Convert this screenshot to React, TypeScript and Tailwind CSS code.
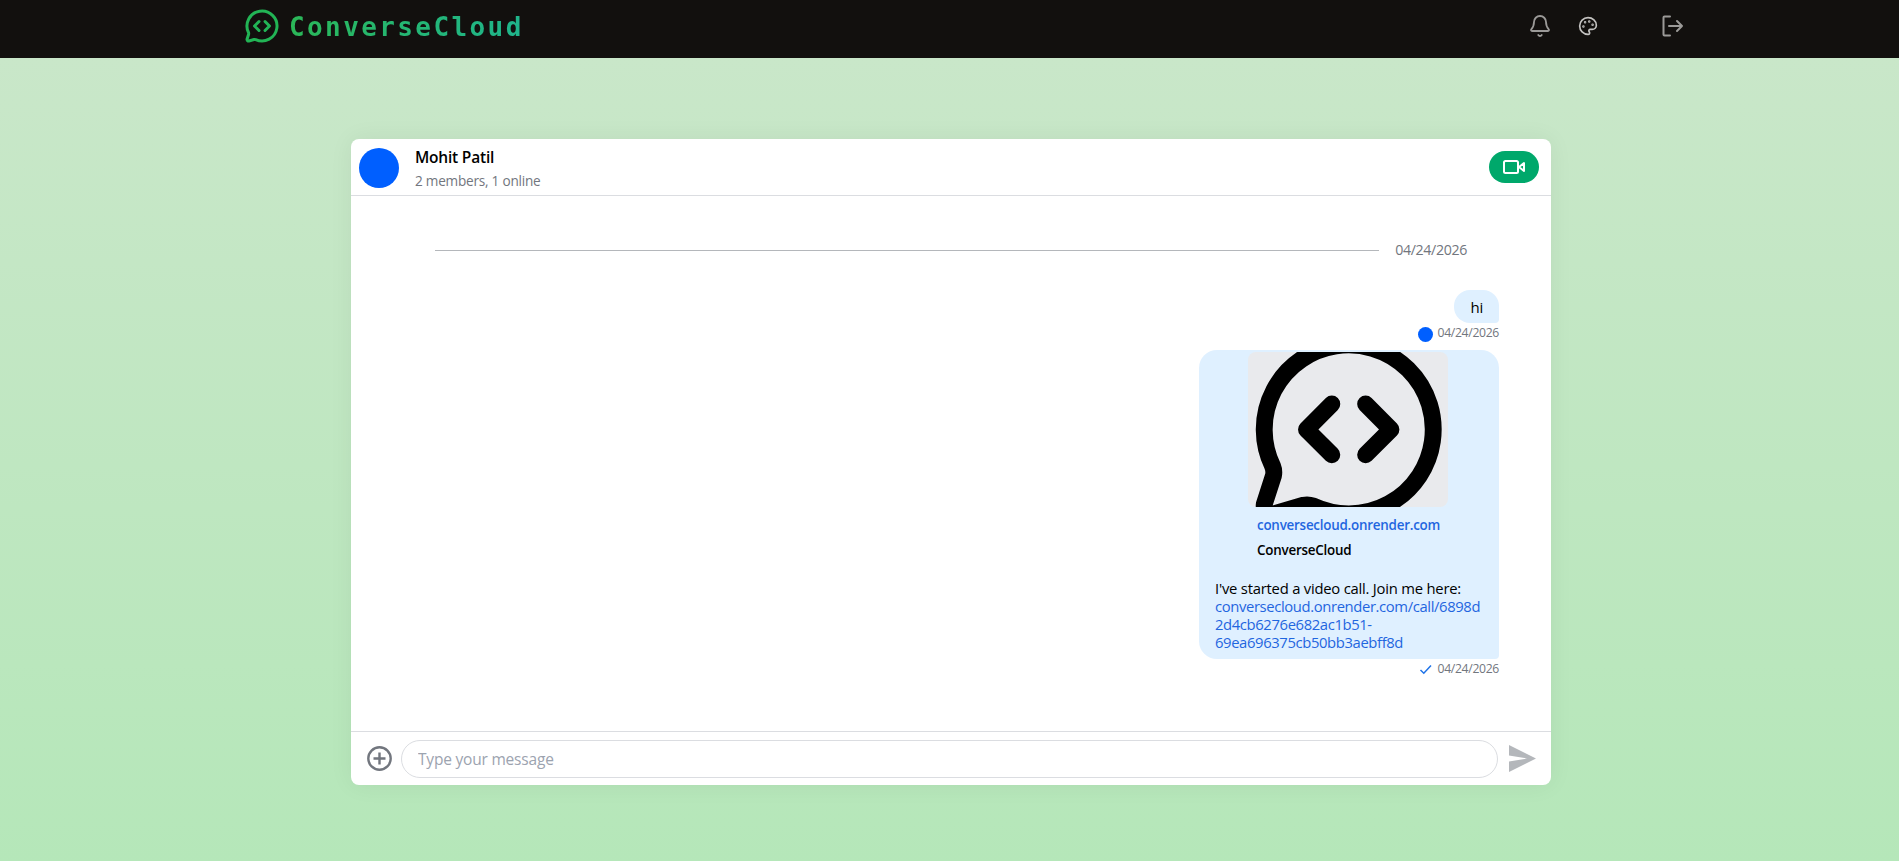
import React, { useState } from 'react';
import { Bell, Palette } from 'lucide-react';

const CALL_LINK = [
    'conversecloud.onrender.com/call/6898d',
    '2d4cb6276e682ac1b51-',
    '69ea696375cb50bb3aebff8d',
];

const BUBBLE_PATH =
    'M2.992 16.342a2 2 0 0 1 .094 1.167l-1.065 3.29a1 1 0 0 0 1.236 1.168l3.413-.998a2 2 0 0 1 1.099.092 10 10 0 1 0-4.777-4.719';

function LogoPaths() {
    return (
        <>
            <path d={BUBBLE_PATH} />
            <path d="m10 9-3 3 3 3" />
            <path d="m14 15 3-3-3-3" />
        </>
    );
}

function Navbar() {
    return (
        <header className="h-[58px] bg-[#12100e] pl-[244px] pr-[214px] flex items-center justify-between pb-[6px]">
            <div className="flex items-center gap-[9px]">
                <svg
                    viewBox="0 0 24 24"
                    className="w-[36px] h-[36px] text-[#22b455]"
                    fill="none"
                    stroke="currentColor"
                    strokeWidth="2"
                    strokeLinecap="round"
                    strokeLinejoin="round"
                >
                    <LogoPaths />
                </svg>
                <span className="bg-gradient-to-r from-[#2bb757] to-[#1fb58c] bg-clip-text text-transparent font-['DejaVu_Sans_Mono',monospace] font-bold text-[26px] leading-8 tracking-[2.4px] pt-[2px]">
                    ConverseCloud
                </span>
            </div>
            <div className="flex items-center text-[#9b9a98]">
                <button className="mr-[26px]">
                    <Bell size={24} strokeWidth={1.8} />
                </button>
                <button className="mr-[61px] text-[#c4c3c1]">
                    <Palette size={20} strokeWidth={2} />
                </button>
                <button>
                    <svg
                        width="26"
                        height="26"
                        viewBox="0 0 26 26"
                        fill="none"
                        stroke="currentColor"
                        strokeWidth="2"
                        strokeLinecap="round"
                        strokeLinejoin="round"
                    >
                        <path d="M11 3.500H5.500a1 1 0 0 0-1 1v17a1 1 0 0 0 1 1H11" />
                        <path d="M10 13h13M18 8l5 5-5 5" />
                    </svg>
                </button>
            </div>
        </header>
    );
}

function ChannelHeader() {
    return (
        <div className="h-[57px] shrink-0 border-b border-[#dbdde1] flex items-center pl-2 pr-3">
            <div className="w-10 h-10 rounded-full bg-[#005fff] mt-[2px]" />
            <div className="ml-4 flex-1 pt-[3px]">
                <div className="text-[15.5px] leading-6 font-semibold tracking-[-0.2px] text-black">Mohit Patil</div>
                <div className="text-[13.6px] leading-6 tracking-[-0.23px] text-[#72767e]">2 members, 1 online</div>
            </div>
            <button className="w-[50px] h-8 rounded-full bg-[#00a86b] flex items-center justify-center">
                <svg width="22" height="14" viewBox="0 0 22 14" fill="none" stroke="white" strokeWidth="2" strokeLinejoin="round">
                    <rect x="1" y="1" width="14" height="12" rx="1.500" />
                    <path d="m16 7 5-4v8z" />
                </svg>
            </button>
        </div>
    );
}

function DateSeparator() {
    return (
        <div className="flex items-center gap-4 pl-[84px] pr-[84px] pt-[44px]">
            <div className="flex-1 h-px bg-[#b4b7bb]" />
            <div className="text-[14.2px] leading-5 tracking-[-0.35px] text-[#72767e]">04/24/2026</div>
        </div>
    );
}

function MessageMeta({ children }: { children: React.ReactNode }) {
    return (
        <div className="flex items-center gap-[5px] h-5 pt-px text-[12.2px] tracking-[-0.32px] text-[#72767e]">
            {children}
            <span>04/24/2026</span>
        </div>
    );
}

function LinkCard() {
    return (
        <div className="w-[200px] ml-[49px]">
            <svg
                viewBox="0.08 2.84 23.67 18.34"
                className="block w-[200px] h-[155px] rounded-lg bg-[#e9eaed]"
                fill="none"
                stroke="black"
                strokeWidth="2"
                strokeLinecap="round"
                strokeLinejoin="round"
            >
                <LogoPaths />
            </svg>
            <div className="pl-[9px] pt-[6px] text-[13.4px] leading-[25px] font-semibold tracking-[-0.23px]">
                <div className="text-[#1f66e0]">conversecloud.onrender.com</div>
                <div className="text-black">ConverseCloud</div>
            </div>
        </div>
    );
}

function MessageList() {
    return (
        <div className="flex-1 min-h-0 flex flex-col">
            <DateSeparator />
            <div className="flex flex-col items-end pr-[52px] pt-[30px]">
                <div className="h-[33px] px-4 pt-[2px] rounded-2xl rounded-br-sm bg-[#dff0ff] flex items-center text-[15px] tracking-[-0.2px]">
                    hi
                </div>
                <MessageMeta>
                    <div className="w-[15px] h-[15px] mt-px rounded-full bg-[#005fff]" />
                </MessageMeta>
                <div className="mt-[7px] w-[300px] h-[309px] pt-[2px] rounded-[18px] rounded-br-sm bg-[#dff0ff]">
                    <LinkCard />
                    <div className="px-4 pt-[16px] text-[14.8px] leading-[18px] tracking-[-0.22px] whitespace-nowrap">
                        <div>I've started a video call. Join me here:</div>
                        <div className="text-[#1f66e0] tracking-[-0.37px]">
                            {CALL_LINK.map((line) => (
                                <div key={line}>{line}</div>
                            ))}
                        </div>
                    </div>
                </div>
                <MessageMeta>
                    <svg width="14" height="12" viewBox="0 0 14 12" fill="none" stroke="#1f73e8" strokeWidth="1.5">
                        <path d="M1.500 6 4.800 9.200 12 1.500" />
                    </svg>
                </MessageMeta>
            </div>
        </div>
    );
}

function MessageInput() {
    const [text, setText] = useState('');

    return (
        <div className="h-[54px] shrink-0 border-t border-[#dbdde1] flex items-center pl-4 pr-[15px]">
            <svg width="25" height="25" viewBox="0 0 25 25" fill="none" stroke="#72767e" strokeWidth="2.4">
                <circle cx="12.500" cy="12.500" r="11.200" />
                <path d="M12.500 6.500v12M6.500 12.500h12" />
            </svg>
            <input
                value={text}
                onChange={(e) => setText(e.target.value)}
                placeholder="Type your message"
                className="ml-[9px] flex-1 h-[38px] rounded-full border border-[#dbdde1] pl-4 pr-4 pt-px text-[15.5px] tracking-[-0.2px] placeholder:text-[#9ca3af] outline-none"
            />
            <button className="ml-[11px]">
                <svg width="27" height="27" viewBox="0 0 27 27" fill="#b4b7bb">
                    <path d="M0 0 27 13.500 0 27V16.500L18 13.500 0 10.500z" />
                </svg>
            </button>
        </div>
    );
}

export default function App() {
    return (
        <div className="h-[861px] flex flex-col overflow-hidden font-['Open_Sans',sans-serif] text-black bg-[#12100e]">
            <Navbar />
            <main className="flex-1 bg-gradient-to-b from-[#c9e7c9] to-[#b5e7b9] pt-[81px] pl-[351px]">
                <div className="w-[1200px] h-[646px] flex flex-col bg-white rounded-lg overflow-hidden shadow-[0_0_24px_rgba(0,0,0,0.06)]">
                    <ChannelHeader />
                    <MessageList />
                    <MessageInput />
                </div>
            </main>
        </div>
    );
}
